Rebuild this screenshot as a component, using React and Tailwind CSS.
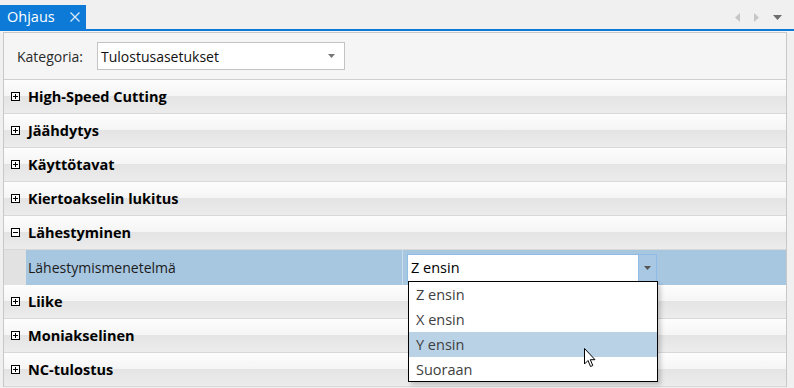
const GROUPS_TOP = ["High-Speed Cutting", "Jäähdytys", "Käyttötavat", "Kiertoakselin lukitus"];
const GROUPS_BOTTOM = ["Liike", "Moniakselinen", "NC-tulostus"];
const OPTIONS = ["Z ensin", "X ensin", "Y ensin", "Suoraan"];

function ToggleBox({ open }) {
  return (
    <svg width="9" height="9" viewBox="0 0 9 9" className="shrink-0">
      <rect x="0.5" y="0.5" width="8" height="8" fill="white" stroke="black" />
      <line x1="2" y1="4.5" x2="7" y2="4.5" stroke="black" />
      {!open && <line x1="4.5" y1="2" x2="4.5" y2="7" stroke="black" />}
    </svg>
  );
}

function GroupRow({ label, open }) {
  return (
    <div className="h-[34px] flex items-center gap-[8px] pl-[7px] border-b border-[#d8d8d8] bg-[linear-gradient(to_bottom,#fdfdfd_0%,#f5f5f5_48%,#e4e4e4_50%,#ececec_100%)]">
      <ToggleBox open={open} />
      <span className="text-[14.5px] font-bold text-black">{label}</span>
    </div>
  );
}

export default function App() {
  return (
    <div className="relative w-[794px] h-[388px] overflow-hidden bg-[#f0f0f0] font-['Open_Sans',sans-serif]">

      {/* Tab strip */}
      <div className="h-[29px] flex items-end justify-between">
        <div className="w-[86px] h-[24px] bg-[#0c7ad6] flex items-center gap-[15px] pl-[7px]">
          <span className="text-[14.5px] text-white leading-none">Ohjaus</span>
          <svg width="10" height="10" viewBox="0 0 10 10">
            <path d="M0.5 0.5 L9.5 9.5 M9.5 0.5 L0.5 9.5" stroke="#dbeaf8" strokeWidth="1.3" />
          </svg>
        </div>
        <div className="flex items-center gap-[14px] pr-[12px] self-center mt-[6px]">
          <svg width="5" height="9" viewBox="0 0 5 9"><path d="M5 0 L0 4.5 L5 9 Z" fill="#c6c6c6" /></svg>
          <svg width="5" height="9" viewBox="0 0 5 9"><path d="M0 0 L5 4.5 L0 9 Z" fill="#c6c6c6" /></svg>
          <svg width="9" height="5" viewBox="0 0 9 5"><path d="M0 0 L9 0 L4.5 5 Z" fill="#6e6e6e" /></svg>
        </div>
      </div>
      <div className="h-[2px] bg-[#0c7ad6]" />
      <div className="h-[1px] bg-[#f5f5f5]" />

      {/* Panel */}
      <div className="ml-[3px] w-[784px] border-t border-l border-r border-[#c8c8c8] bg-[#f5f5f5]">
        <div className="h-[47px] flex items-center pl-[13px] border-b border-[#cfcfcf]">
          <span className="text-[14px] text-[#2a2a2a] w-[80px]">Kategoria:</span>
          <div className="w-[248px] h-[28px] bg-white border border-[#c3c3c3] flex items-center justify-between pl-[3px] pr-[9px]">
            <span className="text-[14px] text-[#111]">Tulostusasetukset</span>
            <svg width="7" height="4" viewBox="0 0 7 4"><path d="M0 0 L7 0 L3.5 4 Z" fill="#777" /></svg>
          </div>
        </div>

        {GROUPS_TOP.map((g) => <GroupRow key={g} label={g} />)}
        <GroupRow label="Lähestyminen" open />

        {/* Property row */}
        <div className="h-[35px] flex bg-[#a7c6e0]">
          <div className="w-[22px] bg-[#e2e2e2]" />
          <div className="w-[377px] flex items-center pl-[2px] border-r border-[#c9dcec]">
            <span className="text-[14px] text-[#1b1b1b]">Lähestymismenetelmä</span>
          </div>
          <div className="pl-[4px] pt-[4px]">
            <div className="w-[250px] h-[28px] flex border border-[#8fbbe6] bg-white">
              <div className="flex-1 flex items-center pl-[3px]">
                <span className="text-[14.5px] text-black">Z ensin</span>
              </div>
              <div className="w-[18px] bg-[#a9c8e3] border-l border-[#8fbbe6] flex items-center justify-center">
                <svg width="7" height="4" viewBox="0 0 7 4"><path d="M0 0 L7 0 L3.5 4 Z" fill="#555" /></svg>
              </div>
            </div>
          </div>
        </div>

        {GROUPS_BOTTOM.map((g) => <GroupRow key={g} label={g} />)}
      </div>

      {/* Dropdown list */}
      <div className="absolute left-[408px] top-[281px] w-[250px] h-[101px] bg-white border border-black shadow-[3px_3px_4px_rgba(0,0,0,0.18)] py-[1px]">
        {OPTIONS.map((o) => (
          <div
            key={o}
            className={`h-[24.7px] flex items-center pl-[7px] text-[14.5px] text-[#404040] ${o === "Y ensin" ? "bg-[#bad2e6]" : ""}`}
          >
            {o}
          </div>
        ))}
      </div>

      {/* Mouse cursor */}
      <svg className="absolute left-[584px] top-[348px]" width="13" height="20" viewBox="0 0 13 20">
        <path d="M0.5 0.5 L0.5 16 L4 12.5 L6.5 18.5 L8.8 17.5 L6.3 11.7 L11 11.7 Z" fill="white" stroke="black" strokeWidth="1" strokeLinejoin="round" />
      </svg>
    </div>
  );
}
